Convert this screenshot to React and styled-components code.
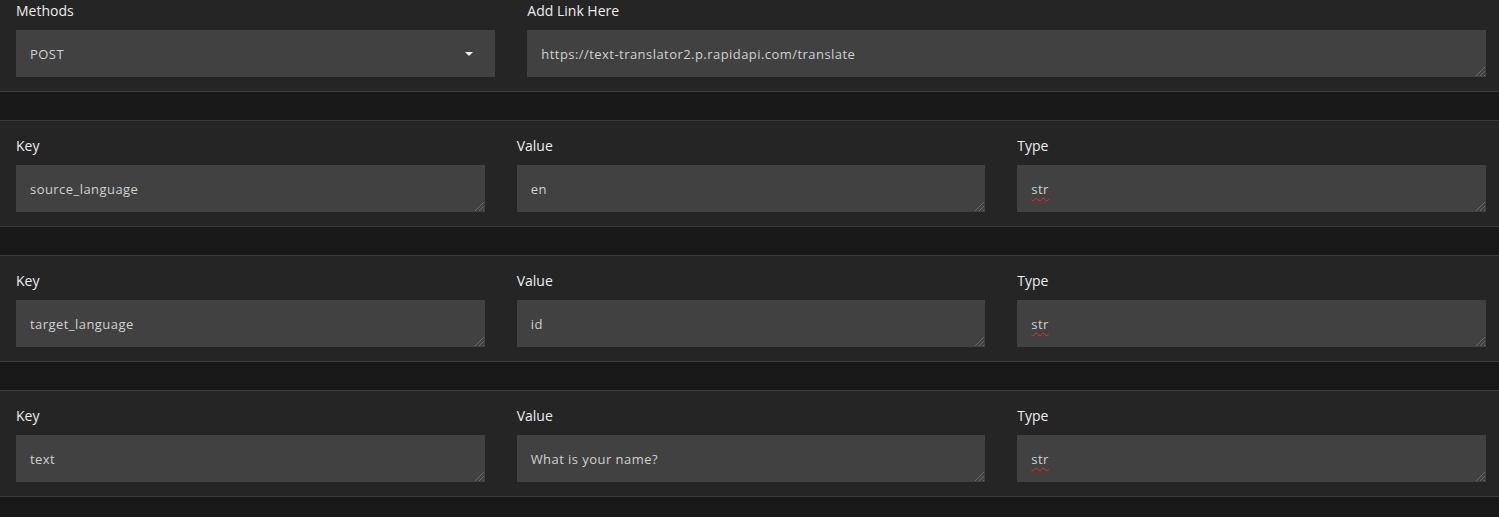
import React from 'react';
import styled, { createGlobalStyle } from 'styled-components';

const GlobalStyle = createGlobalStyle`
  html, body {
    margin: 0;
    padding: 0;
    background: #181818;
    overflow: hidden;
  }
  body {
    font-family: 'Open Sans', 'Noto Sans', sans-serif;
  }
`;

const Page = styled.div`
  margin-top: -15px;
  display: flex;
  flex-direction: column;
  gap: 28px;
`;

const Panel = styled.section`
  background: #252525;
  border-top: 1px solid #3b3b3b;
  border-bottom: 1px solid #3b3b3b;
  padding: 15px 13px 14px 16px;
  display: grid;
  grid-template-columns: ${({ cols }) => cols || 'repeat(3, 1fr)'};
  column-gap: 32px;
`;

const Group = styled.div`
  display: flex;
  flex-direction: column;
  min-width: 0;
`;

const Label = styled.div`
  font-size: 14px;
  line-height: 20px;
  font-weight: 500;
  color: #ececec;
  margin-bottom: 9px;
`;

const Field = styled.div`
  position: relative;
  height: 47px;
  background: #414141;
  box-sizing: border-box;
  padding: 0 14px;
  display: flex;
  align-items: center;
  font-size: 13px;
  letter-spacing: 0.45px;
  color: #d0d0d0;
  white-space: nowrap;

  ${({ resizable }) =>
    resizable &&
    `
    &::after {
      content: '';
      position: absolute;
      right: 1px;
      bottom: 1px;
      width: 10px;
      height: 10px;
      background: repeating-linear-gradient(-45deg, #6a6a6a 0 1px, transparent 1px 3px);
      clip-path: polygon(100% 0, 100% 100%, 0 100%);
    }
  `}
`;

const SelectField = styled(Field)`
  justify-content: space-between;
  padding-right: 22px;
`;

const Caret = styled.span`
  width: 0;
  height: 0;
  border-left: 4px solid transparent;
  border-right: 4px solid transparent;
  border-top: 4px solid #f0f0f0;
`;

const Misspelled = styled.span`
  text-decoration: underline wavy #ff1f1f;
  text-decoration-thickness: 1px;
  text-underline-offset: 3px;
`;

const rows = [
  { key: 'source_language', value: 'en' },
  { key: 'target_language', value: 'id' },
  { key: 'text', value: 'What is your name?' },
];

export default function App() {
  return (
    <>
      <GlobalStyle />
      <Page>
        <Panel cols="1fr 2fr">
          <Group>
            <Label>Methods</Label>
            <SelectField>
              <span>POST</span>
              <Caret />
            </SelectField>
          </Group>
          <Group>
            <Label>Add Link Here</Label>
            <Field resizable>https://text-translator2.p.rapidapi.com/translate</Field>
          </Group>
        </Panel>
        {rows.map((row) => (
          <Panel key={row.key}>
            <Group>
              <Label>Key</Label>
              <Field resizable>{row.key}</Field>
            </Group>
            <Group>
              <Label>Value</Label>
              <Field resizable>{row.value}</Field>
            </Group>
            <Group>
              <Label>Type</Label>
              <Field resizable>
                <Misspelled>str</Misspelled>
              </Field>
            </Group>
          </Panel>
        ))}
      </Page>
    </>
  );
}
